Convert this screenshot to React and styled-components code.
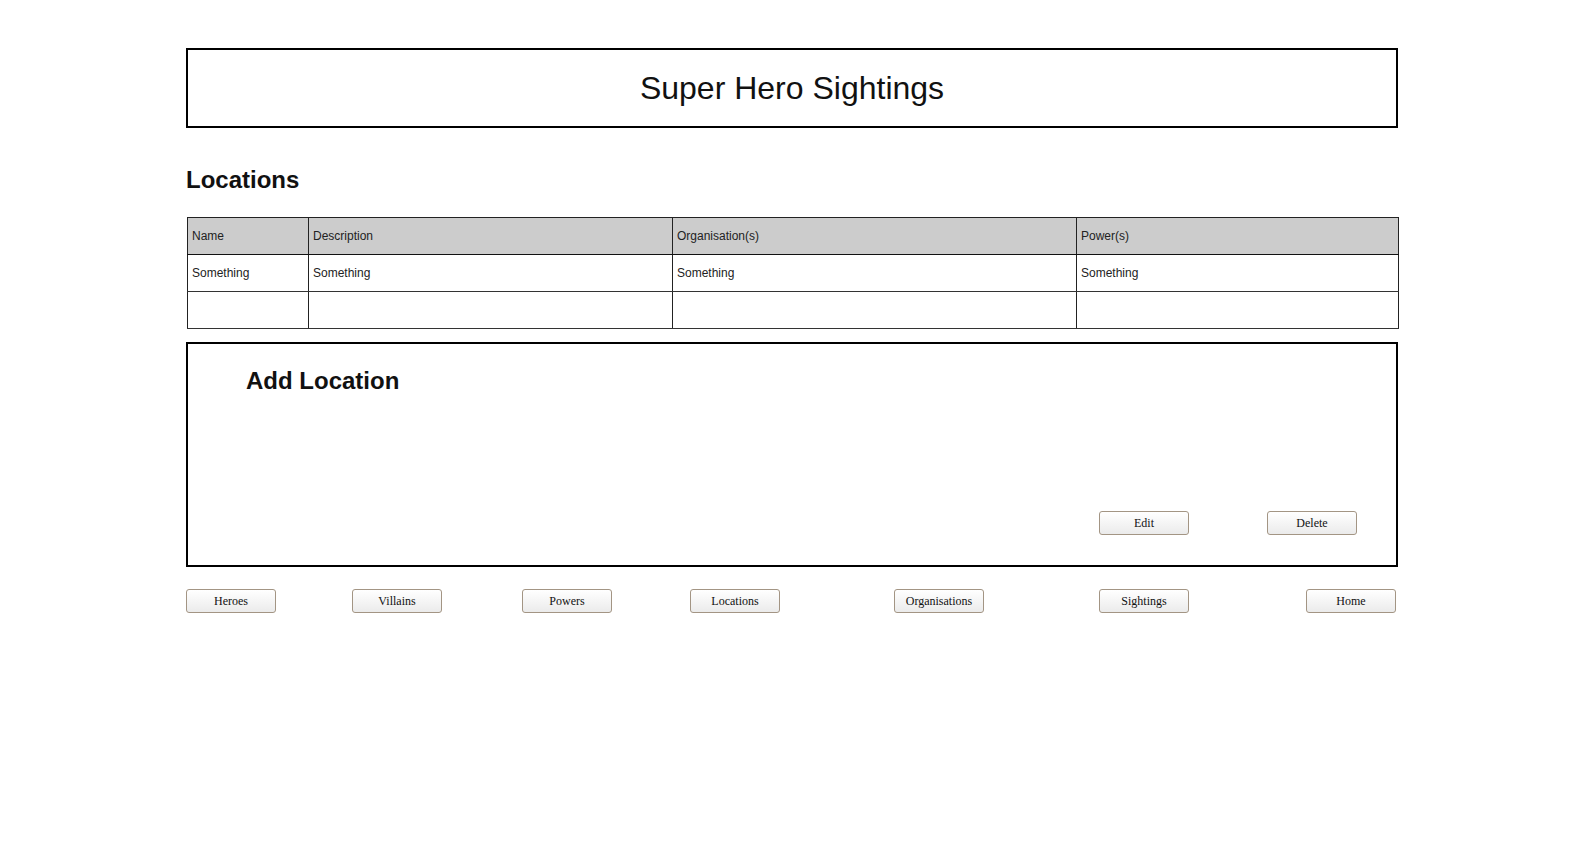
import React from "react";
import styled, { createGlobalStyle } from "styled-components";

const Global = createGlobalStyle`
  html, body { margin: 0; padding: 0; background: #ffffff; }
  body { font-family: "Liberation Sans", Arial, sans-serif; color: #000; }
`;

const Page = styled.div`
  width: 1212px;
  margin-left: 186px;
  padding-top: 48px;
  display: flex;
  flex-direction: column;
`;

const Header = styled.header`
  height: 80px;
  box-sizing: border-box;
  border: 2px solid #000;
  display: flex;
  align-items: center;
  justify-content: center;
`;

const Title = styled.h1`
  margin: 0;
  font-family: "Liberation Sans", Arial, sans-serif;
  font-weight: 400;
  font-size: 32px;
  color: #111;
`;

const SectionTitle = styled.h2`
  margin: 38px 0 24px;
  font-family: "Liberation Sans", Arial, sans-serif;
  font-weight: 700;
  font-size: 24px;
  line-height: 27px;
  color: #111;
`;

const Table = styled.table`
  width: 1211px;
  margin-left: 1px;
  border-collapse: collapse;
  table-layout: fixed;
  border: 1px solid #222;
`;

const Th = styled.th`
  height: 36px;
  padding: 0 0 0 4px;
  background: #cccccc;
  border-right: 1px solid #222;
  border-bottom: 1px solid #111;
  text-align: left;
  font-weight: 400;
  font-size: 12px;
  color: #222;
`;

const Td = styled.td`
  height: 36px;
  padding: 0 0 0 4px;
  border-right: 1px solid #222;
  border-bottom: 1px solid #333;
  font-size: 12px;
  color: #222;
`;

const AddPanel = styled.section`
  margin-top: 13px;
  height: 225px;
  box-sizing: border-box;
  border: 2px solid #000;
  padding: 23px 39px 30px 58px;
  display: flex;
  flex-direction: column;
`;

const PanelTitle = styled.h2`
  margin: 0;
  font-family: "Liberation Sans", Arial, sans-serif;
  font-weight: 700;
  font-size: 24px;
  line-height: 27px;
  color: #111;
`;

const ActionRow = styled.div`
  margin-top: auto;
  display: flex;
  justify-content: flex-end;
  gap: 78px;
`;

const Button = styled.button`
  width: 90px;
  height: 24px;
  margin-left: ${(p) => p.$offset || 0}px;
  box-sizing: border-box;
  border: 1px solid #a39584;
  border-radius: 3px;
  background: linear-gradient(#ffffff, #ebebeb);
  font-family: "Liberation Serif", "Times New Roman", serif;
  font-size: 12px;
  color: #111;
  padding: 0;
  flex: none;
`;

const NavRow = styled.nav`
  margin-top: 22px;
  display: flex;
`;

const cols = [121, 364, 404, 322];
const headers = ["Name", "Description", "Organisation(s)", "Power(s)"];

const nav = [
  ["Heroes", 0],
  ["Villains", 76],
  ["Powers", 80],
  ["Locations", 78],
  ["Organisations", 114],
  ["Sightings", 115],
  ["Home", 117],
];

export default function App() {
  return (
    <>
      <Global />
      <Page>
        <Header>
          <Title>Super Hero Sightings</Title>
        </Header>
        <SectionTitle>Locations</SectionTitle>
        <Table>
          <colgroup>
            {cols.map((w, i) => (
              <col key={i} style={{ width: w }} />
            ))}
          </colgroup>
          <thead>
            <tr>
              {headers.map((h) => (
                <Th key={h}>{h}</Th>
              ))}
            </tr>
          </thead>
          <tbody>
            <tr>
              {headers.map((h) => (
                <Td key={h}>Something</Td>
              ))}
            </tr>
            <tr>
              {headers.map((h) => (
                <Td key={h}></Td>
              ))}
            </tr>
          </tbody>
        </Table>
        <AddPanel>
          <PanelTitle>Add Location</PanelTitle>
          <ActionRow>
            <Button>Edit</Button>
            <Button>Delete</Button>
          </ActionRow>
        </AddPanel>
        <NavRow>
          {nav.map(([label, off]) => (
            <Button key={label} $offset={off}>
              {label}
            </Button>
          ))}
        </NavRow>
      </Page>
    </>
  );
}
